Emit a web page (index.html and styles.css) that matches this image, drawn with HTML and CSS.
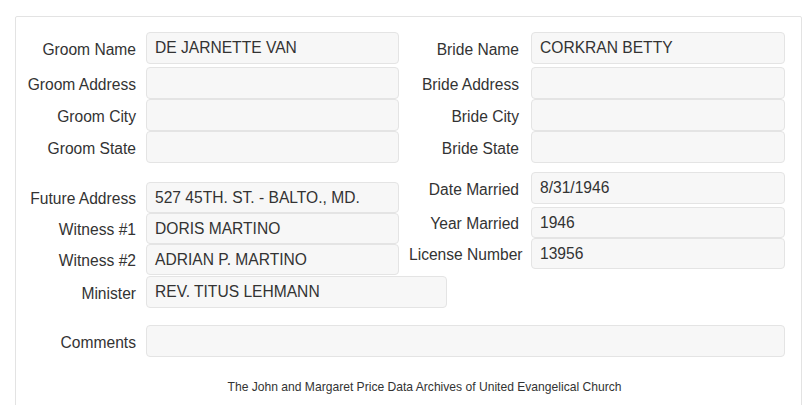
FILE: index.html
```html
<!DOCTYPE html>
<html>
<head>
<meta charset="utf-8">
<link rel="stylesheet" href="styles.css">
</head>
<body>
<div class="panel">
  <div class="section s1">
    <div class="group left">
      <div class="row first"><label class="lbl">Groom Name</label><div class="field">DE JARNETTE VAN</div></div>
      <div class="row"><label class="lbl">Groom Address</label><div class="field"></div></div>
      <div class="row"><label class="lbl">Groom City</label><div class="field"></div></div>
      <div class="row"><label class="lbl">Groom State</label><div class="field"></div></div>
    </div>
    <div class="group right">
      <div class="row first"><label class="lbl">Bride Name</label><div class="field">CORKRAN BETTY</div></div>
      <div class="row"><label class="lbl">Bride Address</label><div class="field"></div></div>
      <div class="row"><label class="lbl">Bride City</label><div class="field"></div></div>
      <div class="row"><label class="lbl">Bride State</label><div class="field"></div></div>
    </div>
  </div>
  <div class="section s2">
    <div class="group left lower">
      <div class="row"><label class="lbl">Future Address</label><div class="field">527 45TH. ST. - BALTO., MD.</div></div>
      <div class="row"><label class="lbl">Witness #1</label><div class="field">DORIS MARTINO</div></div>
      <div class="row"><label class="lbl">Witness #2</label><div class="field">ADRIAN P. MARTINO</div></div>
      <div class="row tall"><label class="lbl">Minister</label><div class="field wide">REV. TITUS LEHMANN</div></div>
    </div>
    <div class="group right">
      <div class="row first"><label class="lbl">Date Married</label><div class="field">8/31/1946</div></div>
      <div class="row"><label class="lbl">Year Married</label><div class="field">1946</div></div>
      <div class="row"><label class="lbl">License Number</label><div class="field">13956</div></div>
    </div>
  </div>
  <div class="row comments"><label class="lbl">Comments</label><div class="field full"></div></div>
  <p class="footer">The John and Margaret Price Data Archives of United Evangelical Church</p>
</div>
</body>
</html>
```
FILE: styles.css
```css
html, body {
  margin: 0;
  padding: 0;
  background: #ffffff;
}
body {
  font-family: "Liberation Sans", Arial, sans-serif;
  font-size: 15.6px;
  color: #333333;
  overflow: hidden;
}
.panel {
  margin: 16px 0 0 15px;
  width: 785px;
  border: 1px solid #e3e3e3;
  border-radius: 2px;
  padding: 15px 0 40px 0;
  box-sizing: content-box;
}
.section {
  display: flex;
  align-items: flex-start;
}
.s2 {
  margin-top: 9px;
}
.group {
  display: flex;
  flex-direction: column;
}
.group.left {
  width: 383px;
}
.group.lower {
  padding-top: 10px;
}
.row {
  display: flex;
  align-items: center;
  height: 32px;
}
.s2 .row {
  height: 31px;
}
.s2 .row.tall {
  height: 32px;
  margin-top: 1px;
}
.row.first {
  margin-bottom: 3px;
}
.s2 .right .row.first {
  height: 32px;
}
.lbl {
  flex: 0 0 auto;
  width: 120px;
  box-sizing: border-box;
  text-align: right;
  white-space: nowrap;
  padding-top: 3px;
}
.left .lbl, .comments .lbl {
  margin-right: 10px;
}
.right .lbl {
  padding-left: 10px;
  margin-right: 12px;
}
.field {
  flex: 0 0 auto;
  box-sizing: border-box;
  width: 253px;
  height: 100%;
  background: #f7f7f7;
  border: 1px solid #e4e4e4;
  border-radius: 4px;
  padding: 0 8px;
  display: flex;
  align-items: center;
  white-space: nowrap;
  overflow: hidden;
}
.right .field {
  width: 254px;
}
.field.wide {
  width: 301px;
}
.comments {
  margin-top: 17px;
}
.field.full {
  width: 639px;
}
.footer {
  margin: 22px 0 0 0;
  padding-left: 32px;
  text-align: center;
  font-size: 12.1px;
  line-height: 17px;
  color: #333333;
}
```
